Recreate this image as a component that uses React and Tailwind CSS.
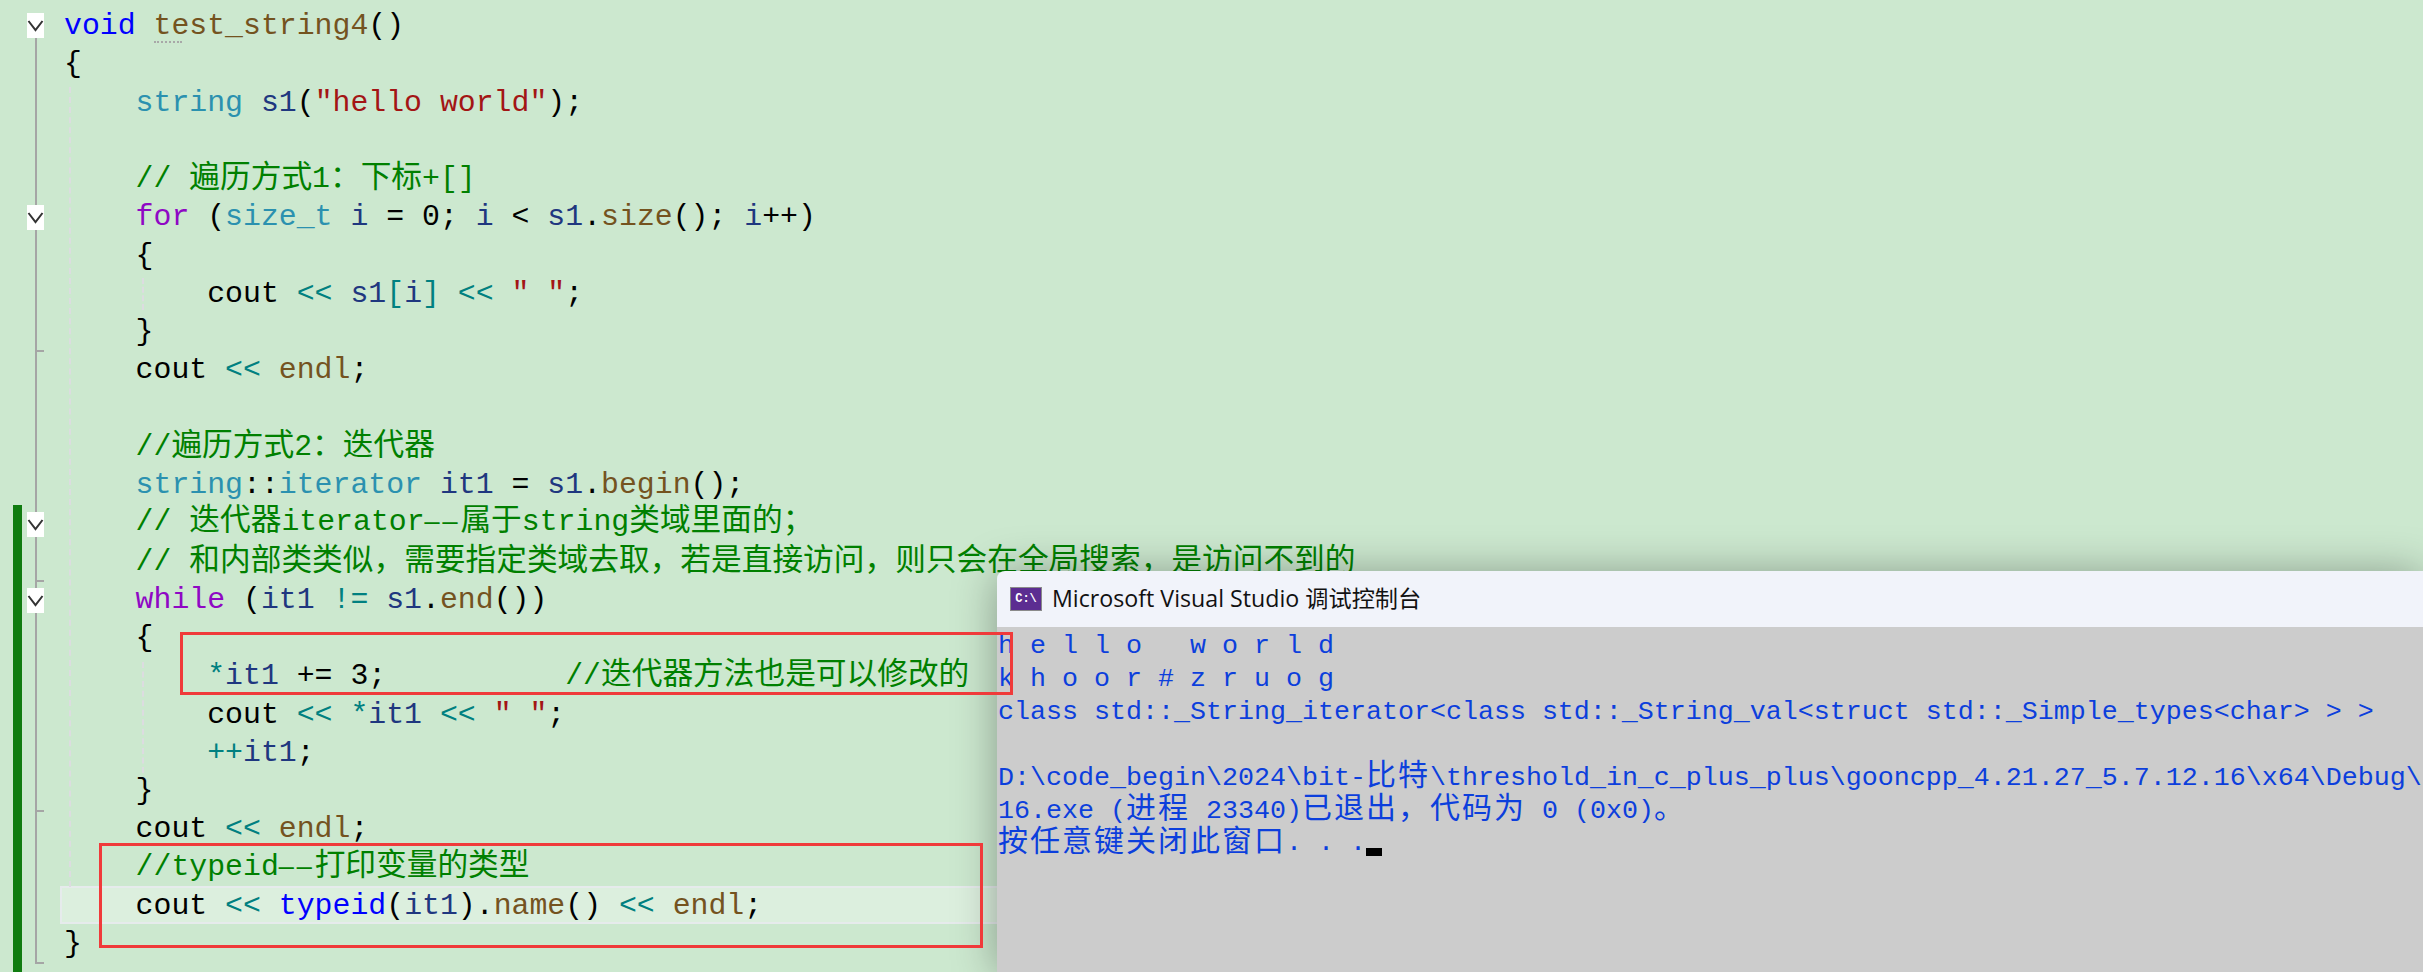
import React from "react";

const kw = "text-[#0000ff]";
const fn = "text-[#74531f]";
const ty = "text-[#2b91af]";
const va = "text-[#1f377f]";
const st = "text-[#a31515]";
const cm = "text-[#008000]";
const ct = "text-[#8f08c4]";
const op = "text-[#008080]";
const pl = "text-black";

const rows = [
  [[kw, "void "], ["dots", "test_string4"], [pl, "()"]],
  [[pl, "{"]],
  [[ty, "    string "], [va, "s1"], [pl, "("], [st, "\"hello world\""], [pl, ");"]],
  [],
  [[cm, "    // 遍历方式1：下标+[]"]],
  [[ct, "    for "], [pl, "("], [ty, "size_t "], [va, "i "], [pl, "= 0; "], [va, "i "], [pl, "< "], [va, "s1"], [pl, "."], [fn, "size"], [pl, "(); "], [va, "i"], [pl, "++)"]],
  [[pl, "    {"]],
  [[pl, "        cout "], [op, "<< "], [va, "s1"], [op, "["], [va, "i"], [op, "] << "], [st, "\" \""], [pl, ";"]],
  [[pl, "    }"]],
  [[pl, "    cout "], [op, "<< "], [fn, "endl"], [pl, ";"]],
  [],
  [[cm, "    //遍历方式2：迭代器"]],
  [[ty, "    string"], [pl, "::"], [ty, "iterator "], [va, "it1 "], [pl, "= "], [va, "s1"], [pl, "."], [fn, "begin"], [pl, "();"]],
  [[cm, "    // 迭代器iterator——属于string类域里面的；"]],
  [[cm, "    // 和内部类类似，需要指定类域去取，若是直接访问，则只会在全局搜索，是访问不到的"]],
  [[ct, "    while "], [pl, "("], [va, "it1 "], [op, "!= "], [va, "s1"], [pl, "."], [fn, "end"], [pl, "())"]],
  [[pl, "    {"]],
  [[op, "        *"], [va, "it1 "], [pl, "+= 3;          "], [cm, "//迭代器方法也是可以修改的"]],
  [[pl, "        cout "], [op, "<< *"], [va, "it1 "], [op, "<< "], [st, "\" \""], [pl, ";"]],
  [[op, "        ++"], [va, "it1"], [pl, ";"]],
  [[pl, "    }"]],
  [[pl, "    cout "], [op, "<< "], [fn, "endl"], [pl, ";"]],
  [[cm, "    //typeid——打印变量的类型"]],
  [[pl, "    cout "], [op, "<< "], [kw, "typeid"], [pl, "("], [va, "it1"], [pl, ")."], [fn, "name"], [pl, "() "], [op, "<< "], [fn, "endl"], [pl, ";"]],
  [[pl, "}"]],
];

function Fold({ y }) {
  return (
    <g>
      <rect x="27" y={y} width="17" height="25" fill="#ffffff" />
      <polyline points={`28.5,${y + 8} 35.5,${y + 17} 42.5,${y + 8}`} fill="none" stroke="#333333" strokeWidth="2" />
    </g>
  );
}

function Gutter() {
  return (
    <svg width="60" height="972" viewBox="0 0 60 972" className="shrink-0">
      <rect x="13" y="505" width="9" height="467" fill="#107c10" />
      <rect x="35" y="38" width="2" height="925" fill="#a5a5a5" />
      {[351, 581, 811, 963].map((y) => (
        <rect key={y} x="35" y={y - 1} width="9" height="2" fill="#a5a5a5" />
      ))}
      {[13, 205, 512, 588].map((y) => (
        <Fold key={y} y={y} />
      ))}
    </svg>
  );
}

function Mixed({ text }) {
  const parts = text.split(/(——|[\u3000-\u9fff\uff00-\uffef]+)/).filter(Boolean);
  return parts.map((p, i) =>
    p === "——" ? (
      <span key={i} className="text-[25px] tracking-[2.9px]">{p}</span>
    ) : /[\u3000-\u9fff\uff00-\uffef]/.test(p) ? (
      <span key={i} className="text-[30.7px]">{p}</span>
    ) : (
      <span key={i}>{p}</span>
    )
  );
}

function Row({ tokens, active }) {
  return (
    <div
      className={
        active
          ? "h-[38.25px] flex items-center pl-[2px] pt-[2px] whitespace-pre bg-[#dcefde] border-2 border-[#e6ebec]"
          : "h-[38.25px] flex items-center pl-[4px] pt-[2px] whitespace-pre"
      }
    >
      <span>
        {tokens.map(([c, t], i) =>
          c === "dots" ? (
            <span key={i} className={`${fn} relative`}>
              {t}
              <span className="absolute left-0 top-[32px] w-[28px] border-b-2 border-dotted border-[#a8a8a8]" />
            </span>
          ) : (
            <span key={i} className={c}>
              <Mixed text={t} />
            </span>
          )
        )}
      </span>
    </div>
  );
}

const L = ({ children }) => <span className="text-[26.67px]">{children}</span>;
const C = ({ children }) => <span className="text-[30px] tracking-[2px]">{children}</span>;

function ConsoleWindow() {
  return (
    <div className="absolute left-[997px] top-[571px] right-0 bottom-0 rounded-tl-[8px] overflow-hidden shadow-[0_2px_44px_rgba(0,0,0,0.34)] flex flex-col [clip-path:inset(-60px_0_0_-60px)]">
      <div className="h-[56px] shrink-0 bg-[#f1f3fa] flex items-center pl-[13px] gap-[10px]">
        <div className="w-[32px] h-[24px] bg-[#5c2d91] border border-[#8a8a8a] flex items-center justify-center text-white text-[12px] font-bold leading-none [font-family:'Liberation_Mono',monospace]">
          C:\
        </div>
        <span className="text-[23.2px] text-[#111111] leading-none [font-family:'Open_Sans','Noto_Sans_CJK_SC',sans-serif]">
          Microsoft Visual Studio 调试控制台
        </span>
      </div>
      <div className="flex-1 bg-[#cccccc] pl-[1px] pt-[2px] text-[#0c3fdc] whitespace-pre [font-family:'Liberation_Mono','Noto_Sans_CJK_SC',monospace]">
        <div className="h-[33px] leading-[33px]"><L>h e l l o   w o r l d</L></div>
        <div className="h-[33px] leading-[33px]"><L>k h o o r # z r u o g</L></div>
        <div className="h-[33px] leading-[33px]"><L>class std::_String_iterator&lt;class std::_String_val&lt;struct std::_Simple_types&lt;char&gt; &gt; &gt;</L></div>
        <div className="h-[33px]" />
        <div className="h-[33px] leading-[33px]"><L>D:\code_begin\2024\bit-</L><C>比特</C><L>\threshold_in_c_plus_plus\gooncpp_4.21.27_5.7.12.16\x64\Debug\</L></div>
        <div className="h-[33px] leading-[33px]"><L>16.exe (</L><C>进程</C><L> 23340)</L><C>已退出，代码为</C><L> 0 (0x0)</L><C>。</C></div>
        <div className="h-[33px] leading-[33px] flex items-start">
          <C>按任意键关闭此窗口</C><L>. . .</L>
          <span className="w-[16px] h-[8px] bg-black mt-[21px]" />
        </div>
      </div>
    </div>
  );
}

export default function App() {
  return (
    <div className="relative w-[2423px] h-[972px] overflow-hidden bg-[#cce8cf] flex text-[29.83px] leading-[38.25px] [font-family:'Liberation_Mono','Noto_Sans_CJK_SC',monospace]">
      <Gutter />
      <div className="relative flex-1 pt-[6px]">
        <div className="absolute left-[9px] top-[87px] h-[800px] border-l-2 border-dashed border-[#dcdce0]" />
        <div className="absolute left-[82px] top-[278px] h-[32px] border-l-2 border-dashed border-[#dcdce0]" />
        <div className="absolute left-[82px] top-[662px] h-[111px] border-l-2 border-dashed border-[#dcdce0]" />
        {rows.map((r, i) => (
          <Row key={i} tokens={r} active={i === 23} />
        ))}
      </div>
      <ConsoleWindow />
      <div className="absolute left-[180px] top-[632px] w-[833px] h-[63px] border-[3px] border-[#f03a3a]" />
      <div className="absolute left-[99px] top-[843px] w-[884px] h-[105px] border-[3px] border-[#f03a3a]" />
    </div>
  );
}
